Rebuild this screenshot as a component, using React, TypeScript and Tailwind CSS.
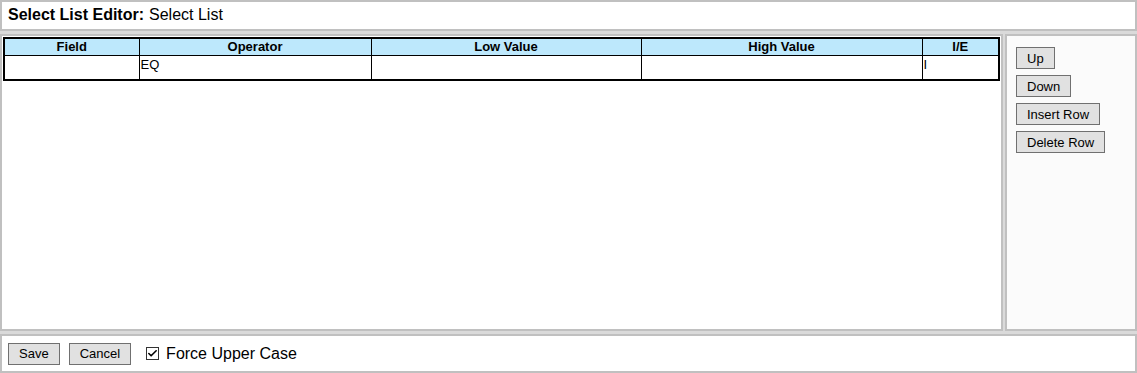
import { Check } from 'lucide-react';

const columns = [
  { key: 'field', label: 'Field', width: 'w-[135px]' },
  { key: 'operator', label: 'Operator', width: 'w-[232px]' },
  { key: 'low', label: 'Low Value', width: 'w-[270px]' },
  { key: 'high', label: 'High Value', width: 'w-[281px]' },
  { key: 'ie', label: 'I/E', width: '' },
];

const rows = [{ field: '', operator: 'EQ', low: '', high: '', ie: 'I' }];

function WinButton({ label, className = '' }: { label: string; className?: string }) {
  return (
    <button
      type="button"
      className={`h-[22px] px-[10px] border border-[#707070] bg-[#e1e1e1] text-[13px] leading-none text-black ${className}`}
    >
      {label}
    </button>
  );
}

export default function App() {
  return (
    <div className="w-[1137px] h-[373px] bg-[#dadada] flex flex-col font-['Liberation_Sans',Arial,sans-serif] text-black">
      <div className="h-[31px] shrink-0 bg-white border-2 border-[#c0c0c0] flex items-center pl-[6px] pb-px text-[16px]">
        <span className="font-bold">Select List Editor:</span>
        <span className="ml-[5px]">Select List</span>
      </div>

      <div className="flex flex-1 mt-[3px] min-h-0">
        <div className="w-[1003px] bg-white border-2 border-[#c0c0c0] p-px">
          <table className="w-[997px] border-collapse border-2 border-black text-[13px] table-fixed">
            <thead>
              <tr className="bg-[#bde8fc] h-[17px]">
                {columns.map((c) => (
                  <th key={c.key} className={`${c.width} border border-black font-bold text-center leading-[15px] p-0`}>
                    {c.label}
                  </th>
                ))}
              </tr>
            </thead>
            <tbody>
              {rows.map((r, i) => (
                <tr key={i} className="h-[25px] align-top">
                  {columns.map((c) => (
                    <td key={c.key} className="border border-black p-0 pl-px leading-[17px]">
                      {r[c.key as keyof typeof r]}
                    </td>
                  ))}
                </tr>
              ))}
            </tbody>
          </table>
        </div>
        <div className="flex-1 ml-[2px] bg-[#fbfbfb] border-2 border-[#c0c0c0] flex flex-col items-start gap-[6px] pl-[9px] pt-[11px]">
          <WinButton label="Up" />
          <WinButton label="Down" />
          <WinButton label="Insert Row" />
          <WinButton label="Delete Row" />
        </div>
      </div>

      <div className="h-[39px] shrink-0 mt-[3px] bg-white border-2 border-[#c0c0c0] flex items-center pl-[6px]">
        <WinButton label="Save" />
        <WinButton label="Cancel" className="ml-[9px]" />
        <label className="ml-[15px] flex items-center text-[16px]">
          <span className="w-[13px] h-[13px] border border-[#333] bg-white flex items-center justify-center">
            <Check size={11} strokeWidth={3.5} className="text-black" />
          </span>
          <span className="ml-[7px]">Force Upper Case</span>
        </label>
      </div>
    </div>
  );
}
